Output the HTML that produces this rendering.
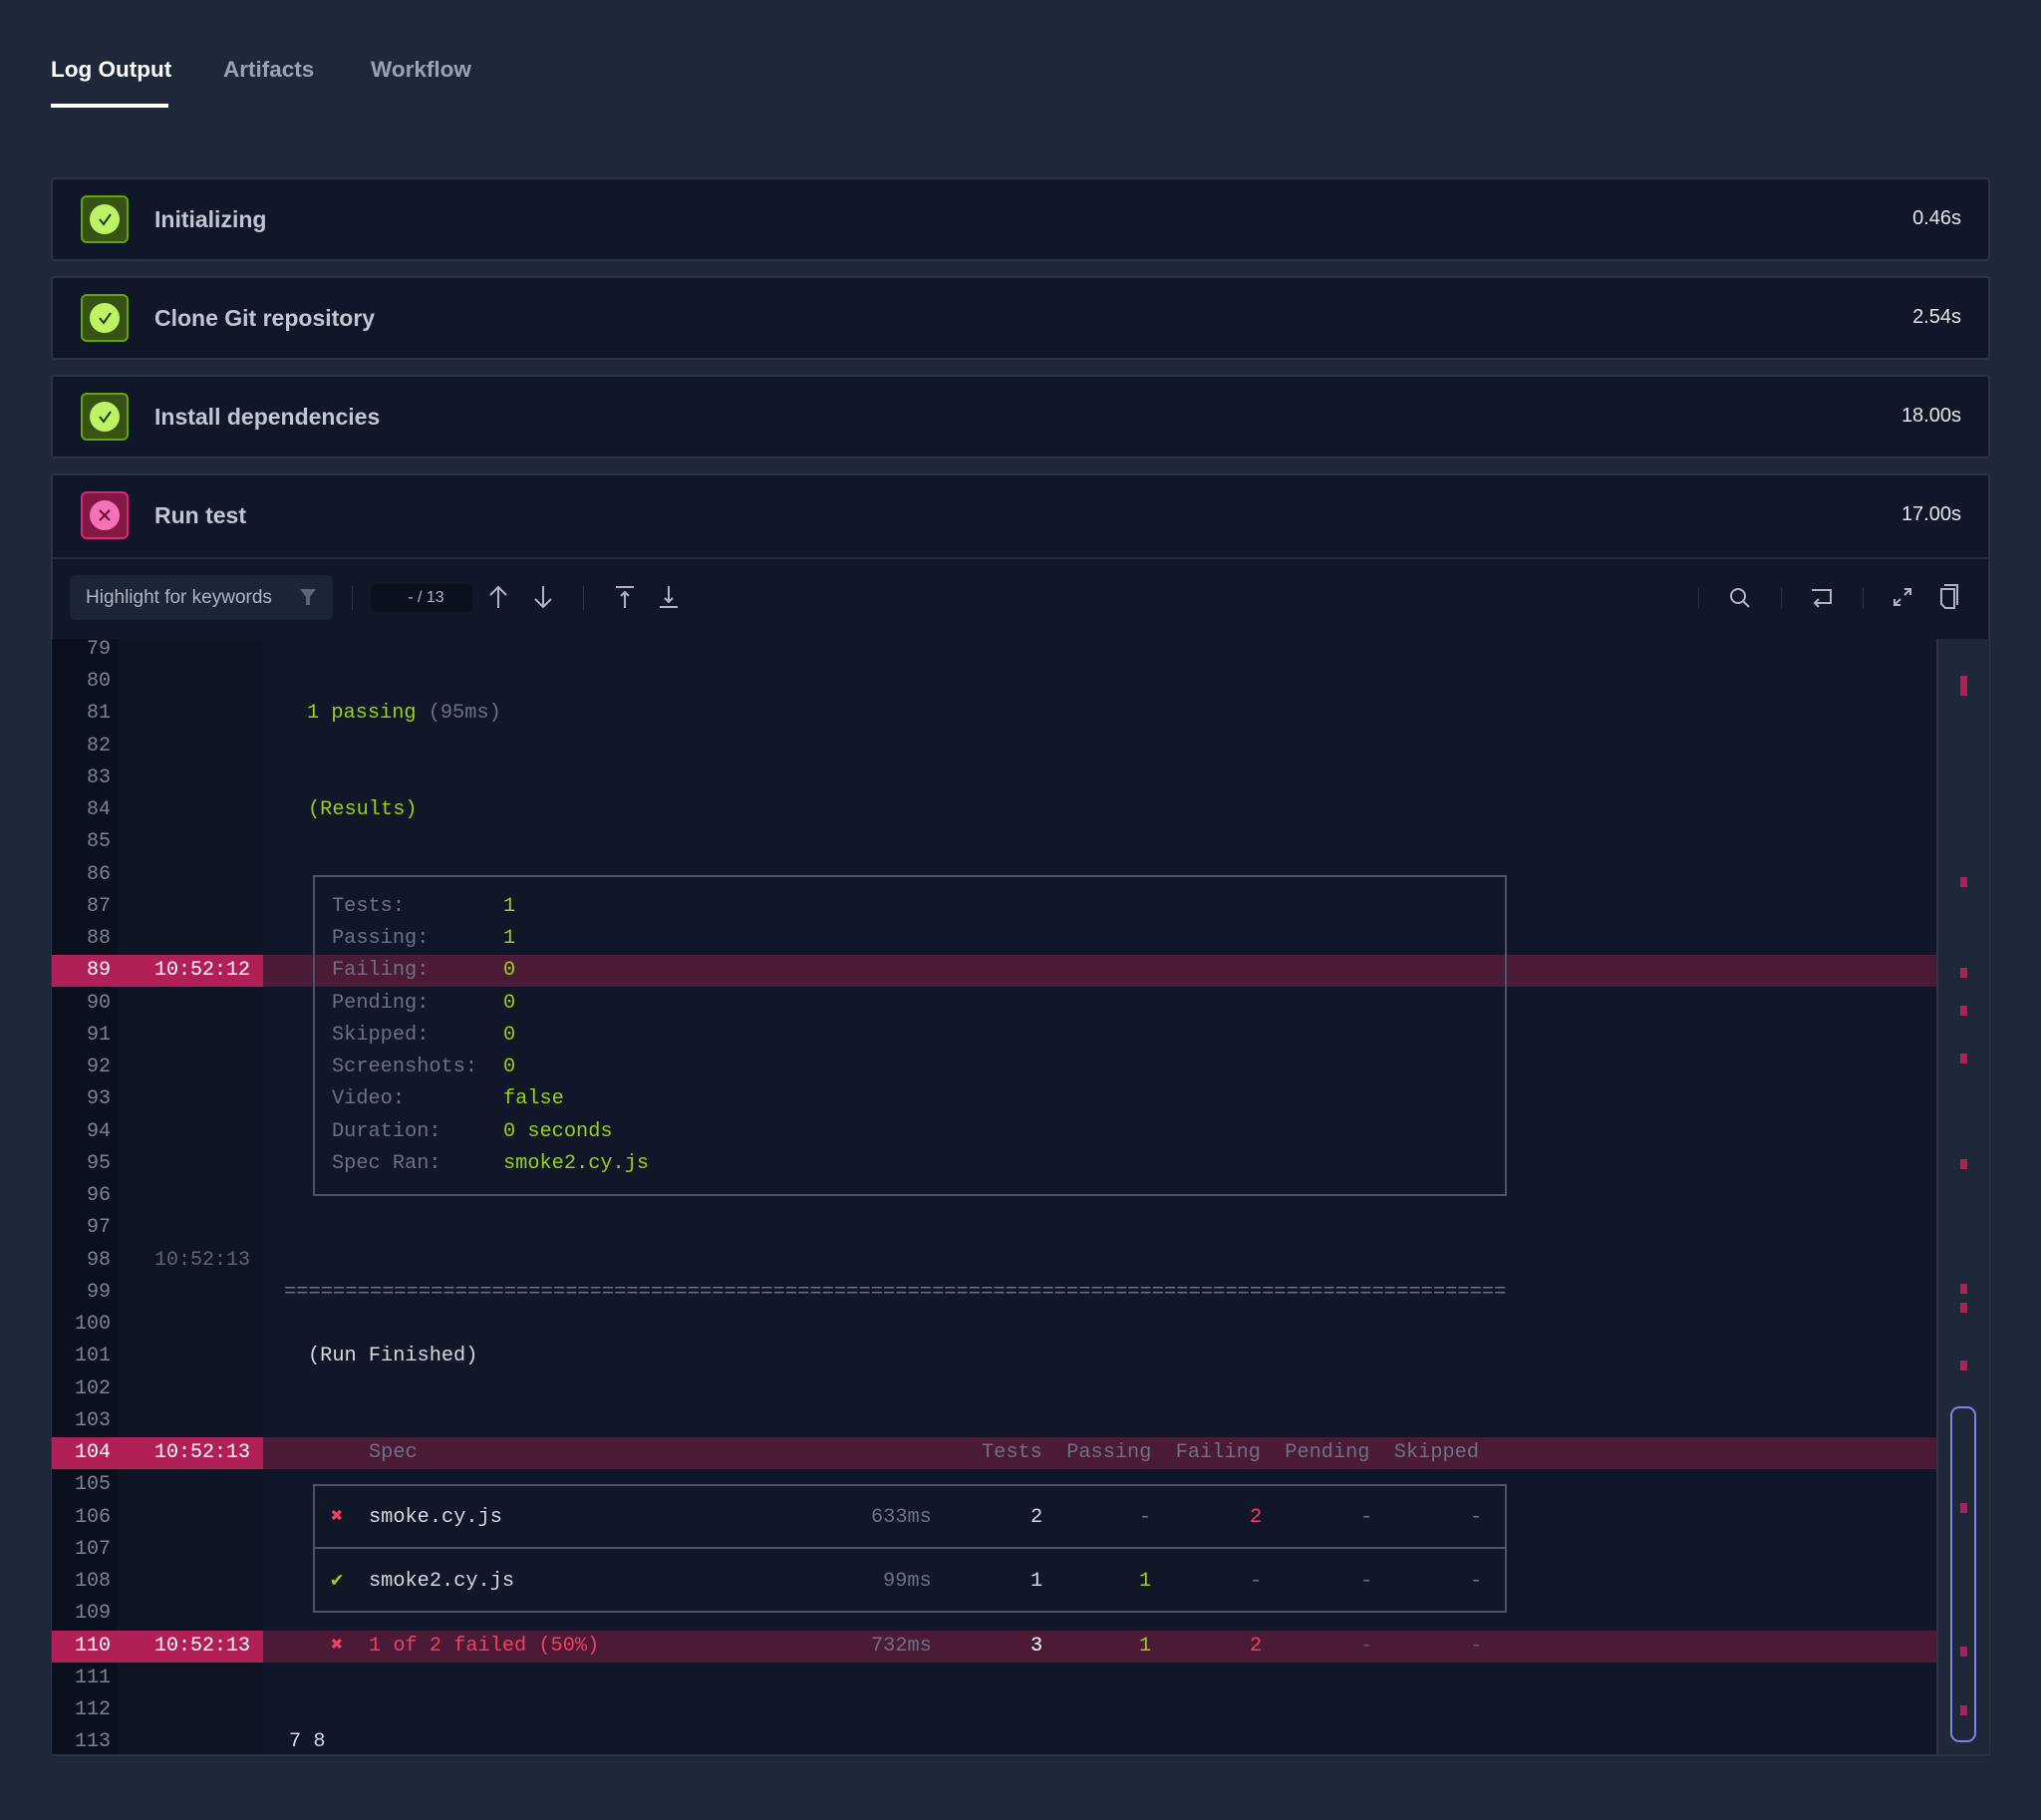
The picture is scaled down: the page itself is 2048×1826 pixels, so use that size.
<!DOCTYPE html>
<html><head><meta charset="utf-8">
<style>
*{box-sizing:border-box;margin:0;padding:0}
html,body{width:2048px;height:1826px;background:#1f2839;overflow:hidden;font-family:"Liberation Sans",sans-serif}
.tab{position:absolute;top:57px;font-size:22.5px;color:#98a3b6;font-weight:bold}
.panel{position:absolute;left:51px;width:1946px;background:#0f1729;border:2px solid #2a3446;border-radius:4px}
.hdr{position:absolute;left:0;right:0;height:80px}
.ico{position:absolute;left:28px;top:16px;width:48px;height:48px;border-radius:6px;border:2px solid #65a30d;background:#365314}
.ico .c{position:absolute;left:7px;top:7px;width:30px;height:30px;border-radius:50%;background:#bef264}
.ico.f{border-color:#db2777;background:#831843}
.ico.f .c{background:#f472b6}
.ttl{position:absolute;left:102px;top:27px;font-size:23px;font-weight:bold;color:#bfc7d3}
.dur{position:absolute;right:27px;top:28px;font-size:20px;color:#e2e6ec}
.mono{font-family:"Liberation Mono",monospace;font-size:20.3px;white-space:pre}
#log{position:absolute;left:52px;top:641px;width:1944px;height:1119px;overflow:hidden;background:#0f1729}
.col1{position:absolute;left:0;top:0;width:66px;height:100%;background:#0a101d}
.col2{position:absolute;left:66px;top:0;width:146px;height:100%;background:#0d1424}
.r{position:absolute;left:0;width:1891px;height:32px;line-height:32px;margin-top:2px}
.n{position:absolute;left:0;width:59px;text-align:right;color:#7b8494;font-family:"Liberation Mono",monospace;font-size:20px}
.t{position:absolute;left:103px;color:#5d6676;font-family:"Liberation Mono",monospace;font-size:20px}
.hl{background:#4b1a37}
.hl .cell{position:absolute;left:0;top:0;width:212px;height:32px;background:#b01f55}
.hl .n,.hl .t{color:#fff}
.s{position:absolute;top:0}
.g{color:#9ccf1a}.gr{color:#6b7383}.w{color:#d5d9e0}.red{color:#f43f5e}.dim{color:#6b5465}
.bx{position:absolute;background:#4c5566}
.mk{position:absolute;left:1915px;width:7px;height:10px;background:#b01f55}
</style></head><body>
<div class="tab" style="left:51px;color:#fff">Log Output</div>
<div style="position:absolute;left:51px;top:104px;width:118px;height:4px;background:#fff"></div>
<div class="tab" style="left:224px">Artifacts</div>
<div class="tab" style="left:372px">Workflow</div>

<div class="panel" style="top:178px;height:84px"><div class="hdr"><div class="ico"><div class="c"><svg width="30" height="30" viewBox="0 0 30 30"><path d="M10 15l4 5 7-10" fill="none" stroke="#1f3a08" stroke-width="2"/></svg></div></div><div class="ttl">Initializing</div><div class="dur">0.46s</div></div></div>
<div class="panel" style="top:277px;height:84px"><div class="hdr"><div class="ico"><div class="c"><svg width="30" height="30" viewBox="0 0 30 30"><path d="M10 15l4 5 7-10" fill="none" stroke="#1f3a08" stroke-width="2"/></svg></div></div><div class="ttl">Clone Git repository</div><div class="dur">2.54s</div></div></div>
<div class="panel" style="top:376px;height:84px"><div class="hdr"><div class="ico"><div class="c"><svg width="30" height="30" viewBox="0 0 30 30"><path d="M10 15l4 5 7-10" fill="none" stroke="#1f3a08" stroke-width="2"/></svg></div></div><div class="ttl">Install dependencies</div><div class="dur">18.00s</div></div></div>
<div class="panel" style="top:475px;height:1287px">
 <div class="hdr"><div class="ico f"><div class="c"><svg width="30" height="30" viewBox="0 0 30 30"><path d="M10 10l10 10M20 10l-10 10" fill="none" stroke="#6b0f35" stroke-width="2"/></svg></div></div><div class="ttl">Run test</div><div class="dur">17.00s</div></div>
 <div style="position:absolute;left:0;right:0;top:82px;height:2px;background:#222c3d"></div>
</div>
<!-- toolbar -->
<div style="position:absolute;left:70px;top:577px;width:264px;height:45px;background:#1c2536;border-radius:6px"></div>
<div style="position:absolute;left:86px;top:589px;font-size:19px;color:#aeb6c3">Highlight for keywords</div>
<svg style="position:absolute;left:300px;top:590px" width="18" height="18" viewBox="0 0 18 18"><path d="M1 1h16l-6 8v8h-4V9z" fill="#5b6575"/></svg>
<div style="position:absolute;left:353px;top:588px;width:1px;height:24px;background:#2a3446"></div>
<div style="position:absolute;left:372px;top:586px;width:102px;height:28px;background:#0a101c;border-radius:6px;color:#aeb6c3;font-size:16px;line-height:28px;text-align:center">&nbsp;&nbsp;- / 13</div>
<svg style="position:absolute;left:488px;top:586px" width="24" height="26" viewBox="0 0 24 26"><path d="M12 24V3M4 11l8-8 8 8" fill="none" stroke="#aeb6c3" stroke-width="2"/></svg>
<svg style="position:absolute;left:533px;top:586px" width="24" height="26" viewBox="0 0 24 26"><path d="M12 2v21M4 15l8 8 8-8" fill="none" stroke="#aeb6c3" stroke-width="2"/></svg>
<div style="position:absolute;left:585px;top:588px;width:1px;height:24px;background:#2a3446"></div>
<svg style="position:absolute;left:616px;top:586px" width="22" height="26" viewBox="0 0 22 26"><path d="M2 3h18M11 24V8M7 12l4-4 4 4" fill="none" stroke="#aeb6c3" stroke-width="2"/></svg>
<svg style="position:absolute;left:660px;top:586px" width="22" height="26" viewBox="0 0 22 26"><path d="M2 23h18M11 2v16M7 14l4 4 4-4" fill="none" stroke="#aeb6c3" stroke-width="2"/></svg>
<div style="position:absolute;left:1704px;top:590px;width:1px;height:20px;background:#2a3446"></div>
<svg style="position:absolute;left:1734px;top:588px" width="24" height="24" viewBox="0 0 24 24"><circle cx="10" cy="10" r="7" fill="none" stroke="#aeb6c3" stroke-width="2"/><path d="M15 15l6 6" stroke="#aeb6c3" stroke-width="2"/></svg>
<div style="position:absolute;left:1787px;top:590px;width:1px;height:20px;background:#2a3446"></div>
<svg style="position:absolute;left:1816px;top:589px" width="24" height="22" viewBox="0 0 24 22"><path d="M2 3h19v13H5M9 12l-4 4 4 4" fill="none" stroke="#aeb6c3" stroke-width="2"/></svg>
<div style="position:absolute;left:1869px;top:590px;width:1px;height:20px;background:#2a3446"></div>
<svg style="position:absolute;left:1898px;top:588px" width="22" height="22" viewBox="0 0 22 22"><path d="M13 3h6v6M19 3l-6 6M9 19H3v-6M3 19l6-6" fill="none" stroke="#aeb6c3" stroke-width="2"/></svg>
<svg style="position:absolute;left:1945px;top:586px" width="22" height="26" viewBox="0 0 22 26"><path d="M6 1h13v20M3 5h13v19H7l-4-4z" fill="none" stroke="#aeb6c3" stroke-width="2"/></svg>

<div id="log">
 <div class="col1"></div><div class="col2"></div>
 <div style="position:absolute;left:1891px;top:0;width:53px;height:100%;background:#1e2839;border-left:2px solid #2a3446"></div>

 <div class="r" style="top:-7px"><span class="n">79</span></div>
 <div class="r" style="top:25px"><span class="n">80</span></div>
 <div class="r" style="top:57px"><span class="n">81</span><span class="s mono" style="left:256px"><span class="g">1 passing</span><span class="gr"> (95ms)</span></span></div>
 <div class="r" style="top:90px"><span class="n">82</span></div>
 <div class="r" style="top:122px"><span class="n">83</span></div>
 <div class="r" style="top:154px"><span class="n">84</span><span class="s mono g" style="left:257px">(Results)</span></div>
 <div class="r" style="top:186px"><span class="n">85</span></div>
 <div class="r" style="top:219px"><span class="n">86</span></div>
 <div class="r" style="top:251px"><span class="n">87</span><span class="s mono gr" style="left:281px">Tests:</span><span class="s mono g" style="left:453px">1</span></div>
 <div class="r" style="top:283px"><span class="n">88</span><span class="s mono gr" style="left:281px">Passing:</span><span class="s mono g" style="left:453px">1</span></div>
 <div class="r hl" style="top:315px"><div class="cell"></div><span class="n">89</span><span class="t">10:52:12</span><span class="s mono gr" style="left:281px">Failing:</span><span class="s mono g" style="left:453px">0</span></div>
 <div class="r" style="top:348px"><span class="n">90</span><span class="s mono gr" style="left:281px">Pending:</span><span class="s mono g" style="left:453px">0</span></div>
 <div class="r" style="top:380px"><span class="n">91</span><span class="s mono gr" style="left:281px">Skipped:</span><span class="s mono g" style="left:453px">0</span></div>
 <div class="r" style="top:412px"><span class="n">92</span><span class="s mono gr" style="left:281px">Screenshots:</span><span class="s mono g" style="left:453px">0</span></div>
 <div class="r" style="top:444px"><span class="n">93</span><span class="s mono gr" style="left:281px">Video:</span><span class="s mono g" style="left:453px">false</span></div>
 <div class="r" style="top:477px"><span class="n">94</span><span class="s mono gr" style="left:281px">Duration:</span><span class="s mono g" style="left:453px">0 seconds</span></div>
 <div class="r" style="top:509px"><span class="n">95</span><span class="s mono gr" style="left:281px">Spec Ran:</span><span class="s mono g" style="left:453px">smoke2.cy.js</span></div>
 <div class="r" style="top:541px"><span class="n">96</span></div>
 <div class="r" style="top:573px"><span class="n">97</span></div>
 <div class="r" style="top:606px"><span class="n">98</span><span class="t">10:52:13</span></div>
 <div class="r" style="top:638px"><span class="n">99</span><span class="s mono gr" style="left:233px;font-size:20.45px">====================================================================================================</span></div>
 <div class="r" style="top:670px"><span class="n">100</span></div>
 <div class="r" style="top:702px"><span class="n">101</span><span class="s mono w" style="left:257px">(Run Finished)</span></div>
 <div class="r" style="top:735px"><span class="n">102</span></div>
 <div class="r" style="top:767px"><span class="n">103</span></div>
 <div class="r hl" style="top:799px"><div class="cell"></div><span class="n">104</span><span class="t">10:52:13</span><span class="s mono gr" style="left:318px">Spec</span><span class="s mono gr" style="left:933px">Tests  Passing  Failing  Pending  Skipped</span></div>
 <div class="r" style="top:831px"><span class="n">105</span></div>
 <div class="r" style="top:864px"><span class="n">106</span><span class="s mono red" style="left:280px">✖</span><span class="s mono w" style="left:318px">smoke.cy.js</span><span class="s mono gr" style="left:822px">633ms</span><span class="s mono w" style="left:982px">2</span><span class="s mono gr" style="left:1091px">-</span><span class="s mono red" style="left:1202px">2</span><span class="s mono gr" style="left:1313px">-</span><span class="s mono gr" style="left:1423px">-</span></div>
 <div class="r" style="top:896px"><span class="n">107</span></div>
 <div class="r" style="top:928px"><span class="n">108</span><span class="s mono g" style="left:280px">✔</span><span class="s mono w" style="left:318px">smoke2.cy.js</span><span class="s mono gr" style="left:834px">99ms</span><span class="s mono w" style="left:982px">1</span><span class="s mono g" style="left:1091px">1</span><span class="s mono gr" style="left:1202px">-</span><span class="s mono gr" style="left:1313px">-</span><span class="s mono gr" style="left:1423px">-</span></div>
 <div class="r" style="top:960px"><span class="n">109</span></div>
 <div class="r hl" style="top:993px"><div class="cell"></div><span class="n">110</span><span class="t">10:52:13</span><span class="s mono red" style="left:280px">✖</span><span class="s mono red" style="left:318px">1 of 2 failed (50%)</span><span class="s mono gr" style="left:822px">732ms</span><span class="s mono" style="left:982px;color:#fff">3</span><span class="s mono g" style="left:1091px">1</span><span class="s mono red" style="left:1202px">2</span><span class="s mono dim" style="left:1313px">-</span><span class="s mono dim" style="left:1423px">-</span></div>
 <div class="r" style="top:1025px"><span class="n">111</span></div>
 <div class="r" style="top:1057px"><span class="n">112</span></div>
 <div class="r" style="top:1089px"><span class="n">113</span><span class="s mono w" style="left:238px">7 8</span></div>

 <!-- box 1 -->
 <div class="bx" style="left:262px;top:237px;width:1198px;height:2px"></div>
 <div class="bx" style="left:262px;top:557px;width:1198px;height:2px"></div>
 <div class="bx" style="left:262px;top:237px;width:2px;height:322px"></div>
 <div class="bx" style="left:1458px;top:237px;width:2px;height:322px"></div>
 <!-- box 2 -->
 <div class="bx" style="left:262px;top:848px;width:1198px;height:2px"></div>
 <div class="bx" style="left:262px;top:911px;width:1198px;height:2px"></div>
 <div class="bx" style="left:262px;top:975px;width:1198px;height:2px"></div>
 <div class="bx" style="left:262px;top:848px;width:2px;height:129px"></div>
 <div class="bx" style="left:1458px;top:848px;width:2px;height:129px"></div>

 <!-- markers -->
 <div class="mk" style="top:37px;height:20px"></div>
 <div class="mk" style="top:239px"></div>
 <div class="mk" style="top:330px"></div>
 <div class="mk" style="top:368px"></div>
 <div class="mk" style="top:416px"></div>
 <div class="mk" style="top:522px"></div>
 <div class="mk" style="top:647px"></div>
 <div class="mk" style="top:666px"></div>
 <div class="mk" style="top:724px"></div>
 <div class="mk" style="top:867px"></div>
 <div class="mk" style="top:1011px"></div>
 <div class="mk" style="top:1070px"></div>
 <div style="position:absolute;left:1905px;top:770px;width:26px;height:337px;border:2px solid #7c83e8;border-radius:9px"></div>
</div>
</body></html>
